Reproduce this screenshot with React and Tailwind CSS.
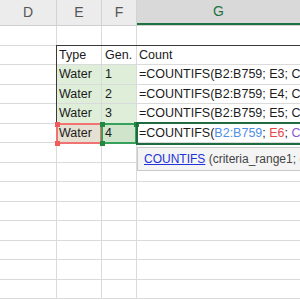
import React from 'react';

// Excel-like sheet: columns D–G, a small table with a COUNTIFS formula
// being edited in G6, range highlights and the function tooltip.

const cols = ['w-[57px]', 'w-[45px]', 'w-[35px]', 'flex-1'];

const rows = [
  ['', '', '', ''],
  ['', 'Type', 'Gen.', 'Count'],
  ['', 'Water', '1', '=COUNTIFS(B2:B759; E3; C2:C759; F3)'],
  ['', 'Water', '2', '=COUNTIFS(B2:B759; E4; C2:C759; F4)'],
  ['', 'Water', '3', '=COUNTIFS(B2:B759; E5; C2:C759; F5)'],
  ['', 'Water', '4', null],
  ['', '', '', ''],
  ['', '', '', ''],
  ['', '', '', ''],
  ['', '', '', ''],
  ['', '', '', ''],
  ['', '', '', ''],
  ['', '', '', ''],
  ['', '', '', ''],
];

function Corner({ className }) {
  return <span className={`absolute w-[5px] h-[5px] ${className}`} />;
}

export default function App() {
  return (
    <div className="relative w-[300px] h-[300px] overflow-hidden bg-white text-[#1b1b1b] font-['Liberation_Sans',Arial,sans-serif]">
      {/* Column headers */}
      <div className="flex h-[26px] bg-[#ececec] border-b border-[#cfcfcf] text-[14px] text-[#555]">
        <div className={`${cols[0]} border-r border-[#d2d2d2] flex items-center justify-center`}>D</div>
        <div className={`${cols[1]} border-r border-[#d2d2d2] flex items-center justify-center`}>E</div>
        <div className={`${cols[2]} border-r border-[#d2d2d2] flex items-center justify-center`}>F</div>
        <div className="flex-1 bg-[#d9d9d9] border-b-2 border-[#1e7145] flex items-center justify-center text-[#1e7145]">G</div>
      </div>

      {/* Grid */}
      {rows.map((r, i) => {
        const green = i >= 2 && i <= 4;
        return (
          <div key={i} className="flex h-[19.5px] text-[12.5px] leading-none">
            <div className={`${cols[0]} border-r border-b border-[#dadada]`} />
            <div className={`${cols[1]} border-r border-b border-[#dadada] pl-[2px] flex items-center ${green ? 'bg-[#dfeed8]' : ''} ${i === 5 ? 'bg-[#e6e0d2]' : ''}`}>
              {r[1]}
            </div>
            <div className={`${cols[2]} border-r border-b border-[#dadada] pl-[3px] flex items-center ${green ? 'bg-[#dfeed8]' : ''} ${i === 5 ? 'bg-[#cfe4cb]' : ''}`}>
              {r[2]}
            </div>
            <div className="flex-1 border-b border-[#dadada] pl-[2px] flex items-center whitespace-nowrap overflow-hidden">
              {r[3] === null ? (
                <span>
                  =COUNTIFS(<span className="text-[#4f8ee8]">B2:B759</span>; <span className="text-[#e8474c]">E6</span>; <span className="text-[#8b55d2]">C2:C759</span>; F6)
                </span>
              ) : (
                r[3]
              )}
            </div>
          </div>
        );
      })}

      {/* Table outline */}
      <div className="absolute left-[56px] top-[45px] w-[260px] h-[79px] border-t border-l border-[#3a3a3a]" />

      {/* E6 reference (red) */}
      <div className="absolute left-[56px] top-[123px] w-[46px] h-[21px] border-2 border-[#f07272]">
        <Corner className="-left-[3.5px] -top-[3.5px] bg-[#ef5a5a]" />
        <Corner className="-left-[3.5px] -bottom-[3.5px] bg-[#ef5a5a]" />
      </div>

      {/* F6 reference (green) */}
      <div className="absolute left-[101px] top-[123px] w-[36px] h-[21px] border-2 border-[#37a05a]">
        <Corner className="-left-[3.5px] -top-[3.5px] bg-[#21883f]" />
        <Corner className="-left-[3.5px] -bottom-[3.5px] bg-[#21883f]" />
        <Corner className="-right-[3.5px] -top-[3.5px] bg-[#21883f]" />
      </div>

      {/* Active cell G6 */}
      <div className="absolute left-[136px] top-[121.5px] w-[180px] h-[23px] border-2 border-[#1d6b3f]" />

      {/* Function tooltip */}
      <div className="absolute left-[137px] top-[146.5px] w-[180px] h-[24px] bg-[#f4f4f4] border border-[#c9c9c9] flex items-center pl-[6px] text-[12px] whitespace-nowrap">
        <span className="text-[#2233d8] underline">COUNTIFS</span>
        <span className="text-[#444]">&nbsp;(criteria_range1; criteria1; …)</span>
      </div>
    </div>
  );
}
